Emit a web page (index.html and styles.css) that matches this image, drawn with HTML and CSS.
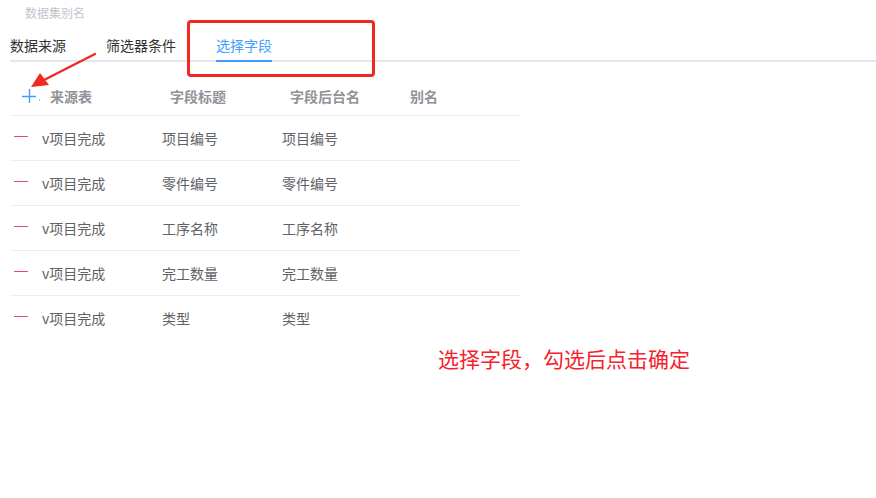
FILE: index.html
```html
<!DOCTYPE html>
<html lang="zh">
<head>
<meta charset="utf-8">
<link rel="stylesheet" href="styles.css">
</head>
<body>
<div class="page">
  <div class="alias">数据集别名</div>
  <div class="tabs">
    <div class="tab">数据来源</div>
    <div class="tab">筛选器条件</div>
    <div class="tab active">选择字段</div>
  </div>
  <div class="table">
    <div class="row head">
      <div class="cell icon">
        <svg class="plus" width="14" height="14" viewBox="0 0 14 14"><path d="M0 7.5 H14 M7.5 0 V14" stroke="#409eff" stroke-width="1.4" fill="none"/></svg>
        <span class="dot"></span>
      </div>
      <div class="cell">来源表</div>
      <div class="cell">字段标题</div>
      <div class="cell">字段后台名</div>
      <div class="cell">别名</div>
    </div>
    <div class="row"><div class="cell icon"><span class="dash"></span></div><div class="cell">v项目完成</div><div class="cell">项目编号</div><div class="cell">项目编号</div><div class="cell"></div></div>
    <div class="row"><div class="cell icon"><span class="dash"></span></div><div class="cell">v项目完成</div><div class="cell">零件编号</div><div class="cell">零件编号</div><div class="cell"></div></div>
    <div class="row"><div class="cell icon"><span class="dash"></span></div><div class="cell">v项目完成</div><div class="cell">工序名称</div><div class="cell">工序名称</div><div class="cell"></div></div>
    <div class="row"><div class="cell icon"><span class="dash"></span></div><div class="cell">v项目完成</div><div class="cell">完工数量</div><div class="cell">完工数量</div><div class="cell"></div></div>
    <div class="row last"><div class="cell icon"><span class="dash"></span></div><div class="cell">v项目完成</div><div class="cell">类型</div><div class="cell">类型</div><div class="cell"></div></div>
  </div>
  <div class="note">选择字段，勾选后点击确定</div>
</div>
<div class="redbox"></div>
<svg class="arrow" width="120" height="100" viewBox="0 0 120 100">
  <path d="M95 54 L44 80" stroke="#f02a21" stroke-width="2.4" fill="none" stroke-linecap="round"/>
  <path d="M31 87 L40 73 L49 85 Z" fill="#f02a21"/>
</svg>
</body>
</html>
```
FILE: styles.css
```css
html, body {
  margin: 0;
  padding: 0;
  background: #ffffff;
  font-family: "Noto Sans CJK SC", "Noto Sans", sans-serif;
}
.page {
  position: relative;
  width: 876px;
  height: 498px;
  padding-left: 10px;
  box-sizing: border-box;
}
.alias {
  padding-left: 15px;
  padding-top: 4px;
  height: 18px;
  font-size: 12px;
  line-height: 18px;
  color: #c0c4cc;
}
.tabs {
  display: flex;
  align-items: flex-start;
  height: 38px;
  border-bottom: 2px solid #e4e7ed;
}
.tab {
  font-size: 14px;
  padding-top: 8px;
  line-height: 30px;
  height: 40px;
  box-sizing: border-box;
  color: #303133;
  margin-right: 40px;
}
.tab.active {
  color: #409eff;
  border-bottom: 2px solid #409eff;
}
.table {
  width: 510px;
  margin-top: 14px;
}
.row {
  display: grid;
  grid-template-columns: 32px 120px 120px 120px 1fr;
  height: 45px;
  box-sizing: border-box;
  align-items: center;
  border-bottom: 1px solid #ebeef5;
  font-size: 14px;
  color: #606266;
}
.row.last { border-bottom-color: transparent; }
.row.head {
  height: 40px;
  font-weight: bold;
  color: #909399;
}
.row.head .cell { padding-left: 8px; }
.row.head .cell.icon { padding-left: 12px; }
.cell {
  white-space: nowrap;
}
.cell.icon {
  padding-left: 4px;
  display: flex;
  align-items: center;
}
.plus {
  display: block;
}
.dot {
  width: 1px;
  height: 2px;
  background: #c0c4cc;
  margin-left: 3px;
  margin-top: 8px;
}
.dash {
  display: block;
  width: 14px;
  height: 1px;
  background: #e8457c;
  margin-top: -4px;
}
.note {
  margin-left: 428px;
  margin-top: 2px;
  font-size: 21px;
  line-height: 30px;
  color: #f5222d;
}
.redbox {
  position: absolute;
  left: 187px;
  top: 20px;
  width: 188px;
  height: 57px;
  box-sizing: border-box;
  border: 3px solid #f02a21;
  border-radius: 4px;
}
.arrow {
  position: absolute;
  left: 0;
  top: 0;
}
```
